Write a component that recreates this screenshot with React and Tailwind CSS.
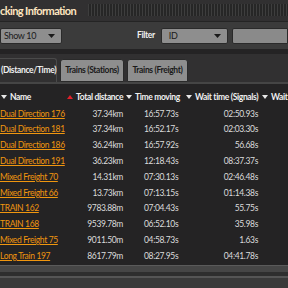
const ROWS = [
  ['Dual Direction 176', '37.34km', '16:57.73s', '02:50.93s'],
  ['Dual Direction 181', '37.34km', '16:52.17s', '02:03.30s'],
  ['Dual Direction 186', '36.24km', '16:57.92s', '56.68s'],
  ['Dual Direction 191', '36.23km', '12:18.43s', '08:37.37s'],
  ['Mixed Freight 70', '14.31km', '07:30.13s', '02:46.48s'],
  ['Mixed Freight 66', '13.73km', '07:13.15s', '01:14.38s'],
  ['TRAIN 162', '9783.88m', '07:04.43s', '55.75s'],
  ['TRAIN 168', '9539.78m', '06:52.10s', '35.98s'],
  ['Mixed Freight 75', '9011.50m', '04:58.73s', '1.63s'],
  ['Long Train 197', '8617.79m', '08:27.95s', '04:41.78s'],
]

function Tri({ red }) {
  return (
    <svg width="6" height="4" viewBox="0 0 6 4" className="shrink-0">
      {red
        ? <path d="M0 4 L3 0 L6 4 Z" fill="#e0202a" />
        : <path d="M0 0 L6 0 L3 4 Z" fill="#e8e8e8" />}
    </svg>
  )
}

function Caret() {
  return (
    <svg width="7" height="4" viewBox="0 0 7 4">
      <path d="M0 0 L7 0 L3.5 4 Z" fill="#1a1a1a" />
    </svg>
  )
}

function Head({ label, red, w }) {
  return (
    <div className={`flex items-center gap-[3px] ${w} shrink-0`}>
      <Tri red={red} />
      <span className="whitespace-nowrap">{label}</span>
    </div>
  )
}

export default function App() {
  return (
    <div
      className="w-[288px] h-[288px] overflow-hidden bg-[#313031] text-[8.5px] tracking-[-0.35px]"
      style={{ fontFamily: 'Lato, "Open Sans", sans-serif' }}
    >
      {/* title bar */}
      <div className="h-[20px] flex items-center gap-2">
        <span className="font-bold text-[11px] tracking-[-0.6px] text-[#ffe6c0] whitespace-nowrap leading-none">cking Information</span>
        <div className="flex-1 h-[12px] ml-1 bg-[repeating-linear-gradient(90deg,#3e3e3e_0px,#3e3e3e_1px,#262626_1px,#262626_3px)]" />
      </div>

      {/* filter panel */}
      <div className="h-[28px] mt-[1px] bg-[#3b3b3b] border-t border-[#242424] flex items-center">
        <div className="w-[62px] h-[16px] bg-[#8e8e8e] border border-[#2a2a2a] rounded-[2px] flex items-center justify-between pl-[3px] pr-[6px] text-[#1a1a1a] text-[9px]">
          <span>Show 10</span>
          <Caret />
        </div>
        <span className="ml-[75px] text-[#f0f0f0] font-bold">Filter</span>
        <div className="ml-[6px] w-[67px] h-[16px] bg-[#8e8e8e] border border-[#2a2a2a] rounded-[2px] flex items-center justify-between pl-[7px] pr-[6px] text-[#1a1a1a] text-[9px]">
          <span>ID</span>
          <Caret />
        </div>
        <div className="ml-[4px] flex-1 h-[16px] bg-[#8a8a8a] border border-[#2a2a2a] rounded-l-[2px]" />
      </div>

      {/* tabs */}
      <div className="h-[5px] bg-[#242324]" />
      <div className="h-[28px] flex items-end gap-[3px]">
        <div className="w-[57px] h-[24px] bg-[#313031] border border-[#4a4a4a] border-b-0 border-l-0 rounded-tr-[3px] flex items-center pl-[1px] text-[#f0f0f0] font-bold whitespace-nowrap">(Distance/Time)</div>
        <div className="w-[64px] h-[23px] bg-[#8e8e8e] border border-[#2a2a2a] rounded-t-[3px] flex items-center justify-center text-[#1a1a1a] font-bold whitespace-nowrap">Trains (Stations)</div>
        <div className="w-[61px] h-[23px] bg-[#8e8e8e] border border-[#2a2a2a] rounded-t-[3px] flex items-center justify-center text-[#1a1a1a] font-bold whitespace-nowrap">Trains (Freight)</div>
      </div>
      <div className="h-[2px] bg-[#454545]" />

      {/* table */}
      <div className="h-[181px] bg-[#242324] pt-[6px]">
        <div className="h-[14px] flex items-center text-[#f0f0f0] font-bold whitespace-nowrap pl-[1px]">
          <Head label="Name" w="w-[66px]" />
          <Head label="Total distance" red w="w-[59px]" />
          <Head label="Time moving" w="w-[60px]" />
          <Head label="Wait time (Signals)" w="w-[76px]" />
          <Head label="Wait time (Stations)" w="w-[80px]" />
        </div>
        <div className="mt-[2px]">
          {ROWS.map(r => (
            <div key={r[0]} className="h-[15.8px] flex items-center text-[#dcdcdc] whitespace-nowrap">
              <span className="w-[68px] shrink-0 text-[#f0960f] underline underline-offset-1">{r[0]}</span>
              <span className="w-[55px] shrink-0 text-right">{r[1]}</span>
              <span className="w-[21px] shrink-0" />
              <span className="w-[42px] shrink-0">{r[2]}</span>
              <span className="w-[72px] shrink-0 text-right">{r[3]}</span>
            </div>
          ))}
        </div>
      </div>

      {/* bottom */}
      <div className="h-[1px] bg-[#5a5a5a]" />
      <div className="h-[6px] bg-[#464646]" />
      <div className="h-[4px] bg-[#2e2e2e]" />
      <div className="h-[2px] bg-[#555555]" />
      <div className="h-[10px] bg-[#3a3a3a]" />
    </div>
  )
}
